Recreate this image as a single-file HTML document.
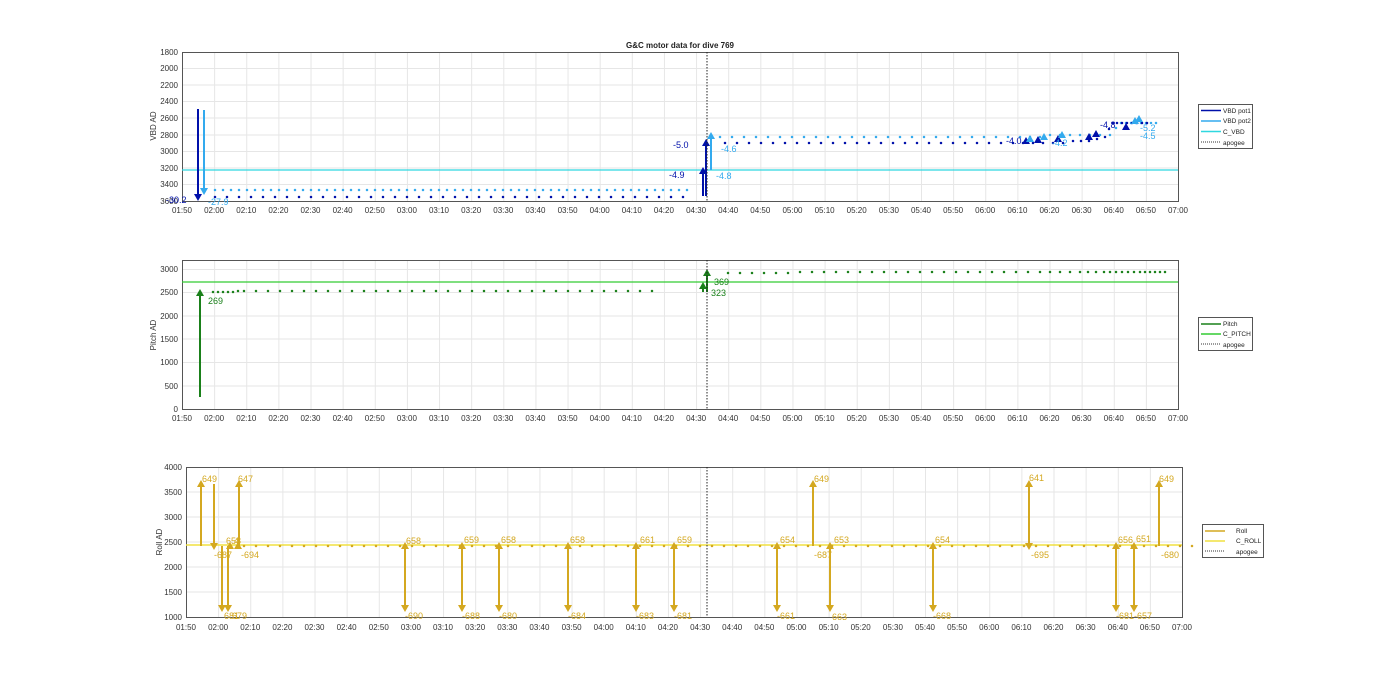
<!DOCTYPE html><html><head><meta charset="utf-8"><style>body{margin:0;background:#fff}svg{display:block;font-family:"Liberation Sans",sans-serif}</style></head><body>
<svg width="1400" height="693" viewBox="0 0 1400 693">
<defs>
<pattern id="gx" x="182" y="0" width="32.13" height="693" patternUnits="userSpaceOnUse"><path d="M0.5 0V693" stroke="#e6e6e6" stroke-width="1"/></pattern>
<g id="xt" font-size="8" fill="#333" text-anchor="middle">
<text x="182">01:50</text><text x="214.1">02:00</text><text x="246.3">02:10</text><text x="278.4">02:20</text><text x="310.5">02:30</text><text x="342.6">02:40</text><text x="374.8">02:50</text><text x="406.9">03:00</text><text x="439">03:10</text><text x="471.2">03:20</text><text x="503.3">03:30</text><text x="535.4">03:40</text><text x="567.6">03:50</text><text x="599.7">04:00</text><text x="631.8">04:10</text><text x="663.9">04:20</text><text x="696.1">04:30</text><text x="728.2">04:40</text><text x="760.3">04:50</text><text x="792.5">05:00</text><text x="824.6">05:10</text><text x="856.7">05:20</text><text x="888.9">05:30</text><text x="921">05:40</text><text x="953.1">05:50</text><text x="985.2">06:00</text><text x="1017.4">06:10</text><text x="1049.5">06:20</text><text x="1081.6">06:30</text><text x="1113.8">06:40</text><text x="1145.9">06:50</text><text x="1178">07:00</text>
</g>
</defs>
<text x="680" y="48" font-size="8" font-weight="bold" text-anchor="middle" fill="#222">G&amp;C motor data for dive 769</text>

<!-- Plot 1 -->
<rect x="182" y="52" width="996" height="149" fill="url(#gx)"/>
<g stroke="#e6e6e6"><path d="M182 68.5H1178M182 85H1178M182 101.5H1178M182 118H1178M182 135H1178M182 151.5H1178M182 168H1178M182 184.5H1178"/></g>
<rect x="182.5" y="52.5" width="996" height="149" fill="none" stroke="#555"/>
<g font-size="8" fill="#333" text-anchor="end"><text x="178" y="55">1800</text><text x="178" y="71">2000</text><text x="178" y="88">2200</text><text x="178" y="104">2400</text><text x="178" y="121">2600</text><text x="178" y="138">2800</text><text x="178" y="154">3000</text><text x="178" y="171">3200</text><text x="178" y="187">3400</text><text x="178" y="204">3600</text></g>
<text transform="translate(156 126) rotate(-90)" font-size="8" fill="#333" text-anchor="middle">VBD AD</text>
<use href="#xt" transform="translate(0 213)"/>
<path d="M182 170H1178" stroke="#2fd8e0" stroke-width="1.3"/>
<path d="M215 190h0m8 0h0m8 0h0m8 0h0m8 0h0m8 0h0m8 0h0m8 0h0m8 0h0m8 0h0m8 0h0m8 0h0m8 0h0m8 0h0m8 0h0m8 0h0m8 0h0m8 0h0m8 0h0m8 0h0m8 0h0m8 0h0m8 0h0m8 0h0m8 0h0m8 0h0m8 0h0m8 0h0m8 0h0m8 0h0m8 0h0m8 0h0m8 0h0m8 0h0m8 0h0m8 0h0m8 0h0m8 0h0m8 0h0m8 0h0m8 0h0m8 0h0m8 0h0m8 0h0m8 0h0m8 0h0m8 0h0m8 0h0m8 0h0m8 0h0m8 0h0m8 0h0m8 0h0m8 0h0m8 0h0m8 0h0m8 0h0m8 0h0m8 0h0m8 0h0M720 137h0m12 0h0m12 0h0m12 0h0m12 0h0m12 0h0m12 0h0m12 0h0m12 0h0m12 0h0m12 0h0m12 0h0m12 0h0m12 0h0m12 0h0m12 0h0m12 0h0m12 0h0m12 0h0m12 0h0m12 0h0m12 0h0m12 0h0m12 0h0m12 0h0m12 0h0m10 0h0m10 0h0m10-2h0m10 0h0m10 0h0m10 0h0m10 0h0m10 0h0m10 0h0m6-7h0m5-5h0m5 0h0m5 0h0m5 0h0m5 0h0m5 0h0m5 0h0m5 0h0" stroke="#33aaee" stroke-width="2.5" stroke-linecap="round" fill="none"/>
<path d="M215 197h0m12 0h0m12 0h0m12 0h0m12 0h0m12 0h0m12 0h0m12 0h0m12 0h0m12 0h0m12 0h0m12 0h0m12 0h0m12 0h0m12 0h0m12 0h0m12 0h0m12 0h0m12 0h0m12 0h0m12 0h0m12 0h0m12 0h0m12 0h0m12 0h0m12 0h0m12 0h0m12 0h0m12 0h0m12 0h0m12 0h0m12 0h0m12 0h0m12 0h0m12 0h0m12 0h0m12 0h0m12 0h0m12 0h0m12 0h0M725 143h0m12 0h0m12 0h0m12 0h0m12 0h0m12 0h0m12 0h0m12 0h0m12 0h0m12 0h0m12 0h0m12 0h0m12 0h0m12 0h0m12 0h0m12 0h0m12 0h0m12 0h0m12 0h0m12 0h0m12 0h0m12 0h0m12 0h0m12 0h0m12 0h0m10 0h0m10 0h0m10 0h0m10 0h0m10 0h0m10-2h0m8 0h0m8 0h0m8-2h0m8-2h0m4-8h0m4-6h0m4 0h0m5 0h0m5 0h0m5 0h0m5 0h0m5 0h0m5 0h0" stroke="#0010aa" stroke-width="2.5" stroke-linecap="round" fill="none"/>
<path d="M198 109V196" stroke="#0010aa" stroke-width="2"/><path d="M194 194h8l-4 7z" fill="#0010aa"/>
<path d="M204 110V190" stroke="#33aaee" stroke-width="2"/><path d="M200 188h8l-4 7z" fill="#33aaee"/>
<path d="M706 196V143" stroke="#0010aa" stroke-width="2"/><path d="M702 146h8l-4-7z" fill="#0010aa"/>
<path d="M703 196V172" stroke="#0010aa" stroke-width="2"/><path d="M699 174h8l-4-7z" fill="#0010aa"/>
<path d="M711 170V136" stroke="#33aaee" stroke-width="2"/><path d="M707 139h8l-4-7z" fill="#33aaee"/>
<g fill="#0010aa"><path d="M1022 144h8l-4-7z M1034 143h8l-4-7z M1054 142h8l-4-7z M1085 140h8l-4-7z M1092 137h8l-4-7z M1122 130h8l-4-7z"/></g>
<g fill="#33aaee"><path d="M1026 142h8l-4-7z M1040 140h8l-4-7z M1058 138h8l-4-7z M1131 124h8l-4-7z M1135 122h8l-4-7z"/></g>
<g font-size="9"><text x="166" y="203" fill="#0010aa">-30.2</text><text x="208" y="205" fill="#33aaee">-27.9</text><text x="673" y="148" fill="#0010aa">-5.0</text><text x="669" y="178" fill="#0010aa">-4.9</text><text x="721" y="152" fill="#33aaee">-4.6</text><text x="716" y="179" fill="#33aaee">-4.8</text><text x="1006" y="144" fill="#0010aa">-4.0</text><text x="1052" y="146" fill="#33aaee">-4.2</text><text x="1100" y="128" fill="#0010aa">-4.8</text><text x="1140" y="131" fill="#33aaee">-5.2</text><text x="1140" y="139" fill="#33aaee">-4.5</text></g>
<rect x="1198.5" y="104.5" width="54" height="44" fill="#fff" stroke="#555"/>
<g font-size="6.5" fill="#222"><path d="M1201 110.5h20" stroke="#0010aa" stroke-width="1.5"/><text x="1223" y="113">VBD pot1</text><path d="M1201 121h20" stroke="#33aaee" stroke-width="1.5"/><text x="1223" y="123">VBD pot2</text><path d="M1201 131.5h20" stroke="#2fd8e0" stroke-width="1.5"/><text x="1223" y="134">C_VBD</text><path d="M1201 142h20" stroke="#333" stroke-dasharray="1 1"/><text x="1223" y="145">apogee</text></g>

<!-- Plot 2 -->
<rect x="182" y="260" width="996" height="149" fill="url(#gx)"/>
<g stroke="#e6e6e6"><path d="M182 269.5H1178M182 292.5H1178M182 316H1178M182 339H1178M182 362.5H1178M182 386H1178"/></g>
<rect x="182.5" y="260.5" width="996" height="149" fill="none" stroke="#555"/>
<g font-size="8" fill="#333" text-anchor="end"><text x="178" y="272">3000</text><text x="178" y="295">2500</text><text x="178" y="319">2000</text><text x="178" y="342">1500</text><text x="178" y="365">1000</text><text x="178" y="389">500</text><text x="178" y="412">0</text></g>
<text transform="translate(156 335) rotate(-90)" font-size="8" fill="#333" text-anchor="middle">Pitch AD</text>
<use href="#xt" transform="translate(0 421)"/>
<path d="M182 282H1178" stroke="#3c3" stroke-width="1.3"/>
<path d="M213 292h0m5 0h0m5 0h0m5 0h0m5 0h0m5-1h0m6 0h0m12 0h0m12 0h0m12 0h0m12 0h0m12 0h0m12 0h0m12 0h0m12 0h0m12 0h0m12 0h0m12 0h0m12 0h0m12 0h0m12 0h0m12 0h0m12 0h0m12 0h0m12 0h0m12 0h0m12 0h0m12 0h0m12 0h0m12 0h0m12 0h0m12 0h0m12 0h0m12 0h0m12 0h0m12 0h0m12 0h0m12 0h0m12 0h0m12 0h0m12 0h0M728 273h0m12 0h0m12 0h0m12 0h0m12 0h0m12 0h0m12-1h0m12 0h0m12 0h0m12 0h0m12 0h0m12 0h0m12 0h0m12 0h0m12 0h0m12 0h0m12 0h0m12 0h0m12 0h0m12 0h0m12 0h0m12 0h0m12 0h0m12 0h0m12 0h0m12 0h0m12 0h0m10 0h0m10 0h0m10 0h0m10 0h0m8 0h0m8 0h0m8 0h0m6 0h0m6 0h0m6 0h0m6 0h0m6 0h0m6 0h0m5 0h0m5 0h0m5 0h0m5 0h0m5 0h0" stroke="#1a801a" stroke-width="2.5" stroke-linecap="round" fill="none"/>
<path d="M200 397V292" stroke="#1a801a" stroke-width="2"/><path d="M196 296h8l-4-7z" fill="#1a801a"/>
<path d="M703 292V284" stroke="#1a801a" stroke-width="2"/><path d="M699 289h8l-4-7z" fill="#1a801a"/>
<path d="M707 292V272" stroke="#1a801a" stroke-width="2"/><path d="M703 276h8l-4-7z" fill="#1a801a"/>
<g font-size="9" fill="#1a801a"><text x="208" y="304">269</text><text x="714" y="285">369</text><text x="711" y="296">323</text></g>
<rect x="1198.5" y="317.5" width="54" height="33" fill="#fff" stroke="#555"/>
<g font-size="6.5" fill="#222"><path d="M1201 324h20" stroke="#1a801a" stroke-width="1.5"/><text x="1223" y="326">Pitch</text><path d="M1201 334h20" stroke="#3c3" stroke-width="1.5"/><text x="1223" y="336">C_PITCH</text><path d="M1201 344h20" stroke="#333" stroke-dasharray="1 1"/><text x="1223" y="347">apogee</text></g>

<!-- Plot 3 -->
<g transform="translate(4 0)">
<rect x="182" y="467" width="996" height="150" fill="url(#gx)"/>
<g stroke="#e6e6e6"><path d="M182 492H1178M182 517H1178M182 542H1178M182 567H1178M182 592H1178"/></g>
<rect x="182.5" y="467.5" width="996" height="150" fill="none" stroke="#555"/>
<use href="#xt" transform="translate(0 630)"/>
</g>
<g font-size="8" fill="#333" text-anchor="end"><text x="182" y="470">4000</text><text x="182" y="495">3500</text><text x="182" y="520">3000</text><text x="182" y="545">2500</text><text x="182" y="570">2000</text><text x="182" y="595">1500</text><text x="182" y="620">1000</text></g>
<text transform="translate(162 542) rotate(-90)" font-size="8" fill="#333" text-anchor="middle">Roll AD</text>
<path d="M186 545H1182" stroke="#f0e040" stroke-width="1.5"/>
<path d="M244 546h0m12 0h0m12 0h0m12 0h0m12 0h0m12 0h0m12 0h0m12 0h0m12 0h0m12 0h0m12 0h0m12 0h0m12 0h0m12 0h0m12 0h0m12 0h0m12 0h0m12 0h0m12 0h0m12 0h0m12 0h0m12 0h0m12 0h0m12 0h0m12 0h0m12 0h0m12 0h0m12 0h0m12 0h0m12 0h0m12 0h0m12 0h0m12 0h0m12 0h0m12 0h0m12 0h0m12 0h0m12 0h0m12 0h0m12 0h0m12 0h0m12 0h0m12 0h0m12 0h0m12 0h0m12 0h0m12 0h0m12 0h0m12 0h0m12 0h0m12 0h0m12 0h0m12 0h0m12 0h0m12 0h0m12 0h0m12 0h0m12 0h0m12 0h0m12 0h0m12 0h0m12 0h0m12 0h0m12 0h0m12 0h0m12 0h0m12 0h0m12 0h0m12 0h0m12 0h0m12 0h0m12 0h0m12 0h0m12 0h0m12 0h0m12 0h0m12 0h0m12 0h0m12 0h0m12 0h0" stroke="#d4a820" stroke-width="2.5" stroke-linecap="round" fill="none"/>
<g stroke="#d4a820" stroke-width="2" fill="none"><path d="M201 546V484M214 484V546M222 546V608M228 546V608M239 546V484M405 546V608M462 546V608M499 546V608M568 546V608M636 546V608M674 546V608M777 546V608M813 546V484M830 546V608M933 546V608M1029 484V546M1116 546V608M1134 546V608M1159 546V484"/></g>
<g fill="#d4a820"><path d="M197 487h8l-4-7zM235 487h8l-4-7zM809 487h8l-4-7zM1025 487h8l-4-7zM1155 487h8l-4-7zM210 543h8l-4 7zM1025 543h8l-4 7zM218 605h8l-4 7zM224 605h8l-4 7zM401 605h8l-4 7zM458 605h8l-4 7zM495 605h8l-4 7zM564 605h8l-4 7zM632 605h8l-4 7zM670 605h8l-4 7zM773 605h8l-4 7zM826 605h8l-4 7zM929 605h8l-4 7zM1112 605h8l-4 7zM1130 605h8l-4 7zM226 549h8l-4-7zM234 549h8l-4-7zM401 549h8l-4-7zM458 549h8l-4-7zM495 549h8l-4-7zM564 549h8l-4-7zM632 549h8l-4-7zM670 549h8l-4-7zM773 549h8l-4-7zM826 549h8l-4-7zM929 549h8l-4-7zM1112 549h8l-4-7zM1130 549h8l-4-7z"/></g>
<g font-size="9" fill="#d4a820"><text x="202" y="482">649</text><text x="238" y="482">647</text><text x="214" y="558">-687</text><text x="241" y="558">-694</text><text x="226" y="544">658</text><text x="234" y="544">4</text><text x="224" y="619">681</text><text x="232" y="619">679</text><text x="406" y="544">658</text><text x="405" y="619">-690</text><text x="464" y="543">659</text><text x="462" y="619">-688</text><text x="501" y="543">658</text><text x="499" y="619">-680</text><text x="570" y="543">658</text><text x="568" y="619">-684</text><text x="640" y="543">661</text><text x="636" y="619">-683</text><text x="677" y="543">659</text><text x="674" y="619">-681</text><text x="780" y="543">654</text><text x="777" y="619">-661</text><text x="814" y="482">649</text><text x="814" y="558">-687</text><text x="834" y="543">653</text><text x="832" y="620">663</text><text x="935" y="543">654</text><text x="933" y="619">-668</text><text x="1029" y="481">641</text><text x="1031" y="558">-695</text><text x="1118" y="543">656</text><text x="1116" y="619">-681</text><text x="1136" y="542">651</text><text x="1134" y="619">-657</text><text x="1159" y="482">649</text><text x="1161" y="558">-680</text></g>
<rect x="1202.5" y="524.5" width="61" height="33" fill="#fff" stroke="#555"/>
<g font-size="6.5" fill="#222"><path d="M1205 531h20" stroke="#d4a820" stroke-width="1.5"/><text x="1236" y="533">Roll</text><path d="M1205 541h20" stroke="#f0e040" stroke-width="1.5"/><text x="1236" y="543">C_ROLL</text><path d="M1205 551h20" stroke="#333" stroke-dasharray="1 1"/><text x="1236" y="554">apogee</text></g>

<g stroke="#222" stroke-dasharray="1.5 1.5" stroke-width="1"><path d="M707 52V201M707 260V409M707 467V617"/></g>
</svg>
</body></html>
